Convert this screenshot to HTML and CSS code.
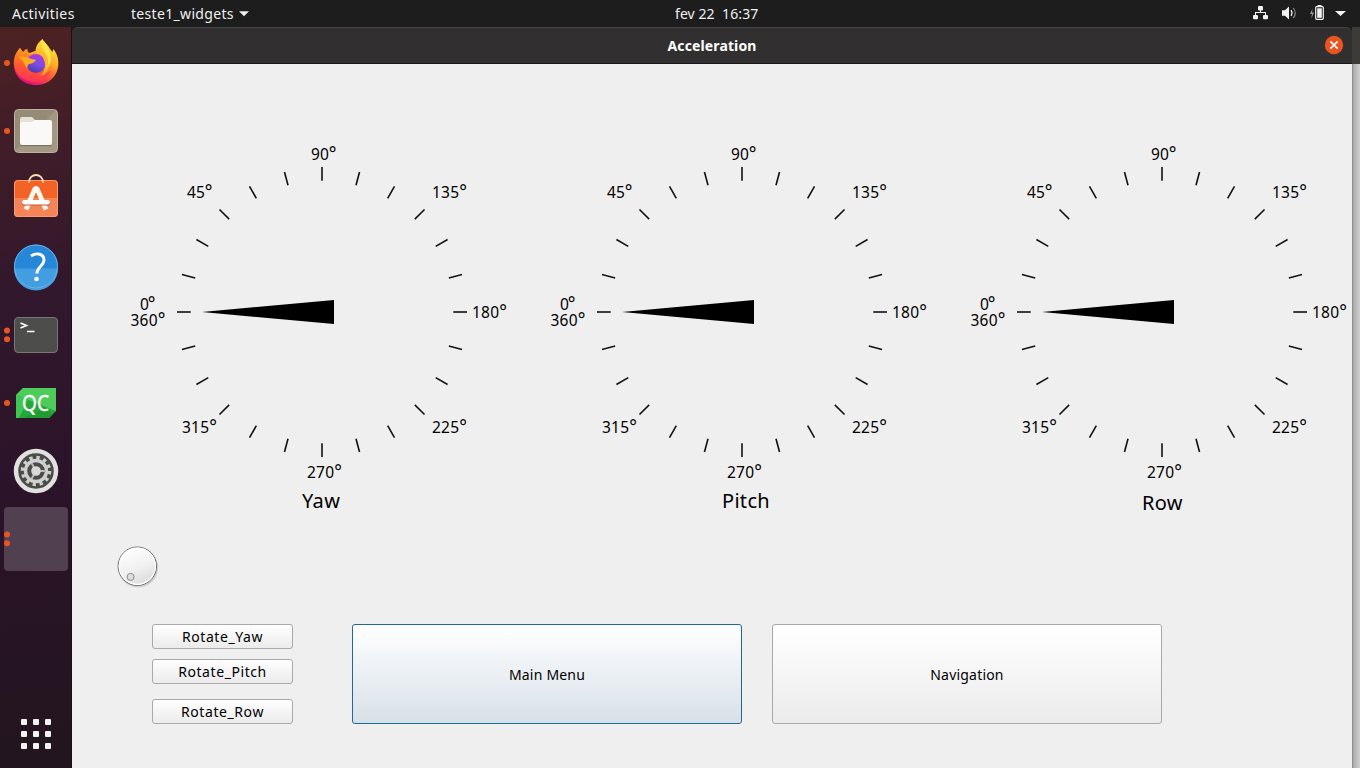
FILE: index.html
```html
<!DOCTYPE html>
<html lang="pt">
<head>
<meta charset="utf-8">
<title>Acceleration</title>
<link rel="stylesheet" href="styles.css">
</head>
<body>
<header class="topbar">
  <div class="topbar-left">
    <span class="activities">Activities</span>
    <span class="appmenu">teste1_widgets</span>
    <svg class="caret" width="10" height="6" viewBox="0 0 10 6"><path d="M0 .3h10L5 5.3z" fill="#f2f2f2"/></svg>
  </div>
  <span class="clock">fev 22&nbsp; 16:37</span>
  <svg class="tray" width="100" height="27" viewBox="0 0 100 27">
    <g fill="#f2f2f2">
      <rect x="6" y="6" width="5" height="4.500" rx="1"/><rect x="1" y="15" width="5" height="4.300" rx="1"/><rect x="11" y="15" width="5" height="4.300" rx="1"/>
      <path d="M8 10h1v2h5v3h-1v-2H4v2H3v-3h5z"/>
      <path d="M30 10.300h3l4-3.800v13l-4-3.700h-3z"/>
      <path d="M83 11h11l-5.500 5z"/>
    </g>
    <path d="M39 10.200q2 2.800 0 5.700" fill="none" stroke="#f2f2f2" stroke-width="1.200"/>
    <path d="M41.300 8q4 5 0 10" fill="none" stroke="#888" stroke-width="1.200"/>
    <path d="M60.500 8.500L58 14h2l-.7 4.500 2.700-6h-2z" fill="#999"/>
    <rect x="63.700" y="6.700" width="7.600" height="12.600" rx="1" fill="none" stroke="#f2f2f2" stroke-width="1.200"/>
    <rect x="65.200" y="8.300" width="4.600" height="9.500" fill="#f2f2f2"/><rect x="65.500" y="5" width="4" height="1.600" fill="#f2f2f2"/>
  </svg>
</header>
<main class="desktop">
  <nav class="dock">
    <svg class="dock-item" viewBox="0 0 64 64">
      <defs>
        <linearGradient id="fox" x1=".8" y1="0" x2=".3" y2="1"><stop offset="0" stop-color="#ffec42"/><stop offset=".4" stop-color="#ffae28"/><stop offset=".65" stop-color="#ff5a35"/><stop offset=".95" stop-color="#e6127a"/></linearGradient>
        <linearGradient id="foxleft" x1="0" y1="0" x2="0" y2="1"><stop offset="0" stop-color="#ff9a16"/><stop offset=".5" stop-color="#ff5d2b"/><stop offset="1" stop-color="#ff3750"/></linearGradient>
        <linearGradient id="globe" x1=".7" y1="0" x2=".3" y2="1"><stop offset="0" stop-color="#b833e1"/><stop offset=".5" stop-color="#7c4ce8"/><stop offset="1" stop-color="#4a3aa5"/></linearGradient>
      </defs>
      <circle class="dot" cx="3" cy="32" r="3"/>
      <path d="M38.500 8c2 4 5.500 5.500 7.500 10l2.500 3 .8-3c4 5 5.200 9.500 5 15.500C53.800 45.500 44.500 54 32 54 19 54 10 45 9.800 33c-.1-7 2-11.500 6.200-16l3 4 3-3 3 4c4-1 5-2 6.500-2 .2-5 3-9 7-12z" fill="url(#fox)"/>
      <path d="M16 17l3 5 4.500-4.500L24 24l7-2 5 5-7 13 10 5 8-6c-2 8-8 12-15 12-12 0-20-7-22-17 0-7 2-12.500 6-17z" fill="url(#foxleft)" opacity=".85"/>
      <circle cx="32" cy="32.500" r="9.500" fill="url(#globe)"/>
      <path d="M37 24c4-1 8 3 8 7 .6 6-2 12-9 14 4-3 5.500-7 5-12-.5-4-2-7-4-9z" fill="#ffb42c"/>
      <path d="M15 26c4-1 8 0 11 1.500 2 .8 4 .7 6 1.500-1.500 3-5 3.500-8 4.500l-1 4c-2-3-3-7-8-11.500z" fill="#ffab1e"/>
      <path d="M38 8c-1 6 1 10 4 15 3 5 2 10 1 15 6-7 4-17-1-25z" fill="#ffed4c" opacity=".8"/>
    </svg>
    <svg class="dock-item" viewBox="0 0 64 64">
      <defs><linearGradient id="files" x1="0" y1="0" x2="1" y2="1"><stop offset=".48" stop-color="#958b77"/><stop offset=".5" stop-color="#a29883"/></linearGradient></defs>
      <circle class="dot" cx="3" cy="32" r="3"/>
      <rect x="10.500" y="10.500" width="43" height="43" rx="4" fill="url(#files)" stroke="#b9b4a2"/>
      <path d="M16 20q0-2 2-2h10l3 3v6H16z" fill="#e5e1d6"/>
      <path d="M16 25q0-2 2-2h10l3-2h15q2 0 2 2v21q0 2-2 2H18q-2 0-2-2z" fill="#faf9f8"/>
      <path d="M17 46.600h30" stroke="#746d5e"/>
    </svg>
    <svg class="dock-item" viewBox="0 0 64 64">
      <rect x="10" y="13" width="44" height="37" rx="4" fill="#f26325"/>
      <path d="M10 31h44v15q0 4-4 4H14q-4 0-4-4z" fill="#f58458"/>
      <rect x="10.500" y="13.500" width="43" height="36" rx="3.500" fill="none" stroke="#f99a71"/>
      <path d="M25 15.500c0-10 14-10 14 0" fill="none" stroke="#fbe1b5" stroke-width="1.800"/>
      <path d="M22 42.500L31 21.500h2l9 21" fill="none" stroke="#fff6ee" stroke-width="4.800" stroke-linejoin="bevel"/>
      <path d="M20 36.300h24" stroke="#c9562e" stroke-width="4.500" stroke-linecap="round"/>
      <path d="M20.300 35.300h23.400" stroke="#fff" stroke-width="4.400" stroke-linecap="round"/>
    </svg>
    <svg class="dock-item" viewBox="0 0 64 64">
      <g transform="translate(0 -.5)">
      <circle cx="32" cy="32" r="22" fill="#2687d9"/>
      <path d="M10 34h44a22 22 0 0 1-44 0z" fill="#439de1"/>
      <circle cx="32" cy="32" r="21.500" fill="none" stroke="#6ab1e7"/>
      <path d="M27 21.500c6-4 13-2 13 4 0 6-7 6.500-7.200 13.500" fill="none" stroke="#fff" stroke-width="2.900"/><circle cx="32.500" cy="44.500" r="2.300" fill="#fff"/>
      </g>
    </svg>
    <svg class="dock-item" viewBox="0 0 64 64">
      <circle class="dot" cx="3" cy="27.500" r="3"/><circle class="dot" cx="3" cy="36.300" r="3"/>
      <rect x="10.500" y="14.500" width="43" height="35" rx="3.500" fill="#4d4d4c" stroke="#777674"/>
      <path d="M16.500 20l6 2.500-6 2.500M23 28.500h7.500" fill="none" stroke="#fff" stroke-width="1.600"/>
    </svg>
    <svg class="dock-item" viewBox="0 0 64 64">
      <circle class="dot" cx="3" cy="32" r="3"/>
      <path d="M19 17h33v23l-7 7H12V24z" fill="#25a739"/>
      <path d="M19 17h33v23L12 24z" fill="#4dcc5b"/><path d="M12 24v23h3l9-18z" fill="#42c453"/><path d="M20 47h25l4-4-9-6z" fill="#1f9b32"/>
      <text x="18" y="39.500" class="qc" textLength="27" lengthAdjust="spacingAndGlyphs">QC</text>
    </svg>
    <svg class="dock-item" viewBox="0 0 64 64">
      <circle cx="32" cy="32" r="20" fill="#4b4b4a" stroke="#e1e1df" stroke-width="4.500"/>
      <circle cx="32" cy="32" r="13.500" fill="none" stroke="#cfcfcd" stroke-width="3.500" stroke-dasharray="3.300 3.768"/>
      <circle cx="32" cy="32" r="10.500" fill="none" stroke="#cfcfcd" stroke-width="3.400"/>
      <path d="M32 32l-4.500-8M32 32l-4.500 8M32 32h10" stroke="#b9b9b7" stroke-width="2"/><circle cx="32" cy="32" r="4.800" fill="#d9d9d7"/>
    </svg>
    <svg class="dock-item active" viewBox="0 0 64 64">
      <circle class="dot" cx="3" cy="27.500" r="3"/><circle class="dot" cx="3" cy="36.300" r="3"/>
    </svg>
    <div class="app-grid"><i></i><i></i><i></i><i></i><i></i><i></i><i></i><i></i><i></i></div>
  </nav>
  <section class="window">
    <div class="titlebar">
      <h1 class="title">Acceleration</h1>
      <svg class="close" width="20" height="20" viewBox="0 0 20 20"><circle cx="10" cy="10" r="9.200" fill="#e95420"/><path d="M6.400 6.400l7.200 7.200M13.600 6.400l-7.200 7.200" stroke="#fff" stroke-width="1.600"/></svg>
    </div>
    <div class="content">
      <div class="gauges">
        <figure class="gauge">
          <svg width="390" height="345" viewBox="0 0 390 345">
            <defs>
              <path id="tick" d="M57 172h13.700" stroke="#111" stroke-width="1.600"/>
              <g id="quarter">
                <use href="#tick"/><use href="#tick" transform="rotate(15 202 172)"/><use href="#tick" transform="rotate(30 202 172)"/><use href="#tick" transform="rotate(45 202 172)"/><use href="#tick" transform="rotate(60 202 172)"/><use href="#tick" transform="rotate(75 202 172)"/>
              </g>
              <g id="face">
                <use href="#quarter"/><use href="#quarter" transform="rotate(90 202 172)"/><use href="#quarter" transform="rotate(180 202 172)"/><use href="#quarter" transform="rotate(270 202 172)"/>
                <path d="M82 172L214 160v24z"/>
                <g class="scale">
                  <text x="20" y="169.500" textLength="15.500">0<tspan class="degree">°</tspan></text>
                  <text x="10.500" y="185.500" textLength="35">360<tspan class="degree">°</tspan></text>
                  <text x="67" y="58" textLength="25.500">45<tspan class="degree">°</tspan></text>
                  <text x="191" y="20" textLength="25.500">90<tspan class="degree">°</tspan></text>
                  <text x="312" y="58" textLength="35">135<tspan class="degree">°</tspan></text>
                  <text x="352" y="178" textLength="35">180<tspan class="degree">°</tspan></text>
                  <text x="312" y="293" textLength="35">225<tspan class="degree">°</tspan></text>
                  <text x="187" y="338" textLength="35">270<tspan class="degree">°</tspan></text>
                  <text x="62" y="293" textLength="35">315<tspan class="degree">°</tspan></text>
                </g>
              </g>
            </defs>
            <use href="#face"/>
          </svg>
          <figcaption class="caption yaw">Yaw</figcaption>
        </figure>
        <figure class="gauge">
          <svg width="390" height="345" viewBox="0 0 390 345"><use href="#face"/></svg>
          <figcaption class="caption pitch">Pitch</figcaption>
        </figure>
        <figure class="gauge">
          <svg width="390" height="345" viewBox="0 0 390 345"><use href="#face"/></svg>
          <figcaption class="caption row">Row</figcaption>
        </figure>
      </div>
      <svg class="dial" width="44" height="44" viewBox="0 0 44 44">
        <defs><linearGradient id="knob" x1=".3" y1="0" x2=".7" y2="1"><stop offset="0" stop-color="#fff"/><stop offset=".55" stop-color="#f0f0f0"/><stop offset="1" stop-color="#d9d9d9"/></linearGradient></defs>
        <circle cx="23.200" cy="23.500" r="20" fill="#bbb" opacity=".6"/>
        <circle cx="22.300" cy="22.200" r="19.200" fill="url(#knob)" stroke="#686868"/>
        <circle cx="22.300" cy="22.200" r="18.100" fill="none" stroke="#fff" stroke-width="1.200"/>
        <circle cx="15.600" cy="32.900" r="3.500" fill="#ddd" stroke="#8c8c8c"/>
      </svg>
      <div class="controls">
        <div class="rotators">
          <button class="button">Rotate_Yaw</button>
          <button class="button">Rotate_Pitch</button>
          <button class="button spaced">Rotate_Row</button>
        </div>
        <button class="button large focused">Main Menu</button>
        <button class="button large">Navigation</button>
      </div>
    </div>
  </section>
  <aside class="edge"></aside>
</main>
</body>
</html>
```
FILE: styles.css
```css
* { box-sizing: border-box; }
body { margin: 0; width: 1360px; height: 768px; overflow: hidden; font-family: "Noto Sans", sans-serif; font-size: 14px; }
svg { display: block; flex: none; }

.topbar { height: 27px; display: grid; grid-template-columns: 602px 156px 1fr; align-items: center; background: #1d1d1d; color: #f0f0f0; line-height: 27px; }
.topbar-left { display: flex; align-items: center; padding-left: 12px; }
.activities { width: 119px; letter-spacing: .45px; }
.appmenu { width: 103px; letter-spacing: .32px; white-space: nowrap; }
.caret { margin-left: 5px; }
.clock { margin-left: 73px; width: 83px; letter-spacing: .08px; white-space: nowrap; }
.tray { justify-self: end; margin-right: 8px; }

.desktop { display: flex; height: 741px; }
.dock { width: 72px; padding: 4px; display: flex; flex-direction: column; gap: 4px; background: linear-gradient(172deg, #4d2222 0, #421d28 14%, #32182c 35%, #2b1329 62%, #23151f 96%); box-shadow: inset -1px 0 #1b101a; }
.dock-item { width: 64px; height: 64px; }
.dock-item.active { border-radius: 4px; background: #51404f; }
.dot { fill: #e95420; }
.qc { font: 21px "Noto Sans", sans-serif; fill: #fff; stroke: #fff; stroke-width: .3px; }
.app-grid { display: grid; grid-template-columns: repeat(3, 6px); gap: 6px; margin: auto 0 15px 17px; }
.app-grid i { height: 6px; border-radius: 1px; background: #f2f2f0; }

.window { width: 1280px; display: flex; flex-direction: column; background: linear-gradient(#1d1d1d 10px, #efefef 10px); }
.titlebar { height: 37px; display: grid; grid-template-columns: 1fr auto 1fr; align-items: center; background: #322f30; border-top: 1px solid #474545; border-bottom: 1px solid #1a1718; border-radius: 6px 6px 0 0; color: #fff; }
.title { grid-column: 2; margin: 0; font-size: 14px; line-height: 20px; letter-spacing: .13px; }
.close { justify-self: end; margin: -2px 8px 0 0; }
.edge { width: 8px; background: linear-gradient(#3c3b37 37px, transparent 37px), linear-gradient(90deg, #858585 0, #b0b0b0 2px, #cfcfcf 8px); }

.content { flex: 1; padding-top: 76px; color: #000; }
.gauges { display: flex; gap: 30px; height: 404px; padding-left: 48px; }
.gauge { margin: 0; }
.scale { font: 15.5px "Noto Sans", sans-serif; }
.degree { font-size: 18px; }
.caption { padding: 4px 0 0 182px; font-size: 20px; line-height: 24px; letter-spacing: .3px; }
.caption.row { padding-top: 6px; }
.dial { margin-left: 43px; }
.controls { display: flex; margin-top: 36px; padding-left: 80px; }
.rotators { display: flex; flex-direction: column; gap: 10px; width: 141px; margin-right: 59px; }
.button { height: 25px; padding: 0; border: 1px solid #a9a9a9; border-radius: 3px; background: linear-gradient(#fff, #ebebeb); color: #000; font: 14px/20px "Noto Sans", sans-serif; letter-spacing: .58px; }
.spaced { margin-top: 5px; }
.large { width: 390px; height: 100px; margin-right: 30px; padding-top: 2px; letter-spacing: .2px; }
.focused { border-color: #21689a; background: linear-gradient(#fff, #d7e0e8); }
```
